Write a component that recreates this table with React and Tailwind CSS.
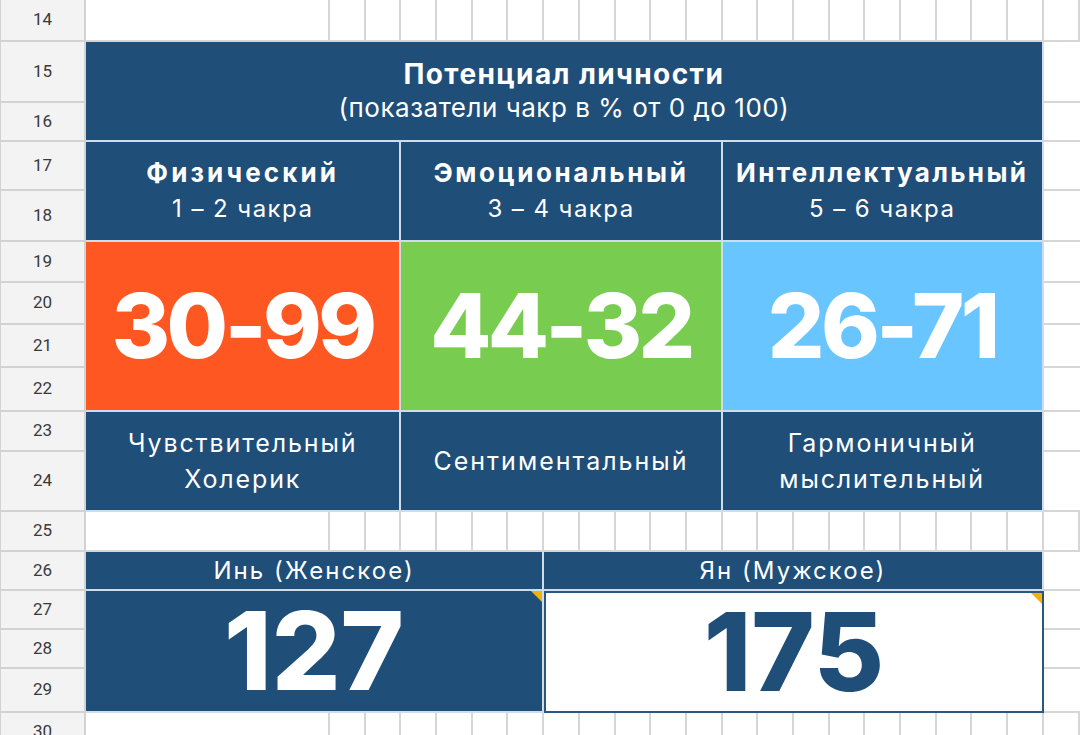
import React from "react";

const ROW_START = ["row-start-1","row-start-2","row-start-3","row-start-4","row-start-5","row-start-6","row-start-7","row-start-8","row-start-9","row-start-10","row-start-11","row-start-12","row-start-13","row-start-14","row-start-15","row-start-16","row-start-17"];
const COL_START = ["col-start-1","col-start-2","col-start-3","col-start-4","col-start-5","col-start-6","col-start-7","col-start-8","col-start-9","col-start-10","col-start-11","col-start-12","col-start-13","col-start-14","col-start-15","col-start-16","col-start-17","col-start-18","col-start-19","col-start-20","col-start-21","col-start-22","col-start-23"];

const LABELS = [14,15,16,17,18,19,20,21,22,23,24,25,26,27,28,29,30];

const gray = "bg-white border-r-2 border-b-2 border-[#d6d6d6]";
const blue = "bg-[#1f4e79] border-r-2 border-b-2 border-[#cfdcea] text-white flex flex-col items-center justify-center text-center";
const big = "flex items-center justify-center text-white text-[89px] font-extrabold tracking-[-0.04em] border-r-2 border-b-2 border-[#cfdcea]";

function GrayRow({ row }) {
  const cells = [];
  for (let c = 2; c <= 23; c++) {
    cells.push(<div key={c} className={`${ROW_START[row - 1]} ${COL_START[c - 1]} ${gray}`} />);
  }
  return cells;
}

function Corner() {
  return (
    <svg className="absolute top-0 right-0" width="11" height="11" viewBox="0 0 11 11">
      <polygon points="0,0 11,0 11,11" fill="#f0b30a" />
    </svg>
  );
}

export default function App() {
  const rightCells = [];
  for (let r = 2; r <= 16; r++) {
    if (r === 12) continue;
    rightCells.push(<div key={r} className={`${ROW_START[r - 1]} col-start-23 bg-white border-b-2 border-[#d6d6d6]`} />);
  }
  return (
    <div className="w-[1080px] h-[735px] overflow-hidden bg-white grid grid-cols-[86px_244px_repeat(20,35.7px)_36px] grid-rows-[42px_61px_39px_49px_51px_41px_42px_43px_44px_40px_60px_40px_39px_39px_39px_44px_40px] font-['Inter',sans-serif]">
      {LABELS.map((n, i) => (
        <div key={n} className={`${ROW_START[i]} col-start-1 bg-[#f3f3f3] border-l border-r-2 border-b-2 border-[#d2d2d2] flex items-center justify-center font-['Roboto',sans-serif] text-[17px] text-[#3a3a3a]`}>
          {n}
        </div>
      ))}

      <GrayRow row={1} />
      <GrayRow row={12} />
      <GrayRow row={17} />
      {rightCells}

      {/* Title */}
      <div className={`row-start-2 row-span-2 col-start-2 col-span-21 ${blue}`}>
        <div className="text-[28px] font-bold leading-[34px] tracking-[0.05em]">Потенциал личности</div>
        <div className="text-[26px] leading-[34px] tracking-[0.02em]">(показатели чакр в % от 0 до 100)</div>
      </div>

      {/* Section headers */}
      <div className={`row-start-4 row-span-2 col-start-2 col-span-3 ${blue}`}>
        <div className="text-[26px] font-bold leading-[36px] tracking-[0.12em]">Физический</div>
        <div className="text-[24px] leading-[36px] tracking-[0.06em]">1 – 2 чакра</div>
      </div>
      <div className={`row-start-4 row-span-2 col-start-5 col-span-9 ${blue}`}>
        <div className="text-[26px] font-bold leading-[36px] tracking-[0.1em]">Эмоциональный</div>
        <div className="text-[24px] leading-[36px] tracking-[0.06em]">3 – 4 чакра</div>
      </div>
      <div className={`row-start-4 row-span-2 col-start-14 col-span-9 ${blue}`}>
        <div className="text-[26px] font-bold leading-[36px] tracking-[0.09em]">Интеллектуальный</div>
        <div className="text-[24px] leading-[36px] tracking-[0.06em]">5 – 6 чакра</div>
      </div>

      {/* Values */}
      <div className={`row-start-6 row-span-4 col-start-2 col-span-3 bg-[#ff5722] ${big}`}>30-99</div>
      <div className={`row-start-6 row-span-4 col-start-5 col-span-9 bg-[#78cc50] ${big}`}>44-32</div>
      <div className={`row-start-6 row-span-4 col-start-14 col-span-9 bg-[#68c5ff] ${big}`}>26-71</div>

      {/* Descriptions */}
      <div className={`row-start-10 row-span-2 col-start-2 col-span-3 ${blue}`}>
        <div className="text-[25px] leading-[36px] tracking-[0.075em]">Чувствительный</div>
        <div className="text-[25px] leading-[36px] tracking-[0.075em]">Холерик</div>
      </div>
      <div className={`row-start-10 row-span-2 col-start-5 col-span-9 ${blue}`}>
        <div className="text-[25px] leading-[36px] tracking-[0.08em]">Сентиментальный</div>
      </div>
      <div className={`row-start-10 row-span-2 col-start-14 col-span-9 ${blue}`}>
        <div className="text-[25px] leading-[36px] tracking-[0.075em]">Гармоничный</div>
        <div className="text-[25px] leading-[36px] tracking-[0.075em]">мыслительный</div>
      </div>

      {/* Yin / Yang */}
      <div className={`row-start-13 col-start-2 col-span-7 ${blue}`}>
        <div className="text-[24px] leading-[30px] tracking-[0.085em]">Инь (Женское)</div>
      </div>
      <div className={`row-start-13 col-start-9 col-span-14 ${blue}`}>
        <div className="text-[24px] leading-[30px] tracking-[0.085em]">Ян (Мужское)</div>
      </div>
      <div className={`relative row-start-14 row-span-3 col-start-2 col-span-7 ${blue}`}>
        <div className="text-[108px] font-extrabold leading-none">127</div>
        <Corner />
      </div>
      <div className="relative row-start-14 row-span-3 col-start-9 col-span-14 bg-white border-2 border-[#2a5680] flex items-center justify-center">
        <div className="text-[108px] font-extrabold leading-none text-[#1f4e79]">175</div>
        <Corner />
      </div>
    </div>
  );
}
